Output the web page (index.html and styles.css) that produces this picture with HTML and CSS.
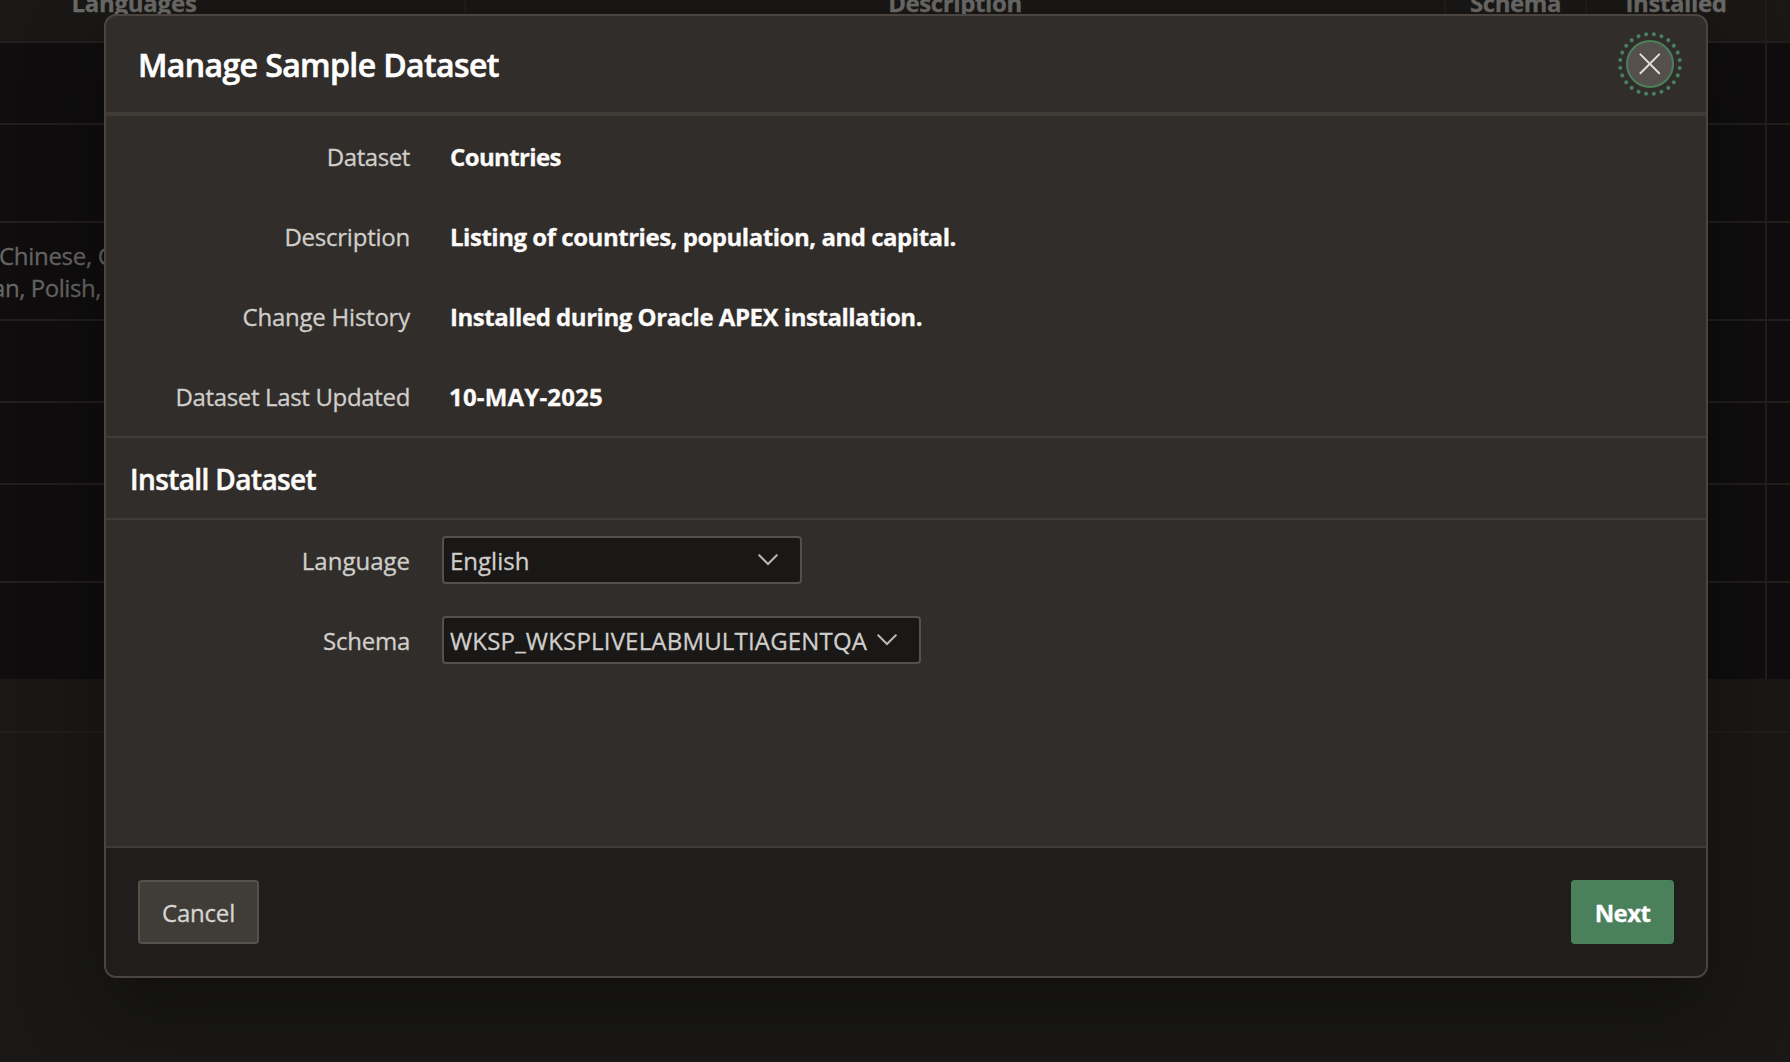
FILE: index.html
```html
<!DOCTYPE html>
<html lang="en">
<head>
<meta charset="utf-8">
<title>Manage Sample Dataset</title>
<link rel="stylesheet" href="styles.css">
</head>
<body>
<main class="page">
  <div class="report">
    <div class="row row-head"><div class="cell head-languages">Languages</div><div class="cell">Description</div><div class="cell">Schema</div><div class="cell head-installed">Installed</div><div class="cell"></div></div>
    <div class="row row-short"><div class="cell"></div><div class="cell"></div><div class="cell"></div><div class="cell"></div><div class="cell"></div></div>
    <div class="row"><div class="cell"></div><div class="cell"></div><div class="cell"></div><div class="cell"></div><div class="cell"></div></div>
    <div class="row"><div class="cell languages"><span>Chinese, C</span><span class="second">an, Polish,</span></div><div class="cell"></div><div class="cell"></div><div class="cell"></div><div class="cell"></div></div>
    <div class="row row-short"><div class="cell"></div><div class="cell"></div><div class="cell"></div><div class="cell"></div><div class="cell"></div></div>
    <div class="row row-short"><div class="cell"></div><div class="cell"></div><div class="cell"></div><div class="cell"></div><div class="cell"></div></div>
    <div class="row"><div class="cell"></div><div class="cell"></div><div class="cell"></div><div class="cell"></div><div class="cell"></div></div>
    <div class="row row-last"><div class="cell"></div><div class="cell"></div><div class="cell"></div><div class="cell"></div><div class="cell"></div></div>
  </div>
  <div class="report-foot"></div>
</main>

<section class="dialog" role="dialog" aria-labelledby="dialog-title">
  <header class="dialog-head">
    <h1 class="dialog-title" id="dialog-title">Manage Sample Dataset</h1>
    <button class="close" aria-label="Close">
      <svg class="close-icon" viewBox="0 0 64 64">
        <circle class="focus-dots" cx="32" cy="32" r="30" pathLength="240" transform="rotate(7.5 32 32)"/>
        <circle class="close-disc" cx="32" cy="32" r="23"/>
        <path class="close-cross" d="M22.4 22.4 L41.2 41.2 M41.2 22.4 L22.4 41.2"/>
      </svg>
    </button>
  </header>
  <div class="dialog-body">
    <div class="field"><div class="label tightest">Dataset</div><div class="value countries">Countries</div></div>
    <div class="field"><div class="label tight">Description</div><div class="value">Listing of countries, population, and capital.</div></div>
    <div class="field"><div class="label tight">Change History</div><div class="value">Installed during Oracle APEX installation.</div></div>
    <div class="field"><div class="label tighter">Dataset Last Updated</div><div class="value date">10-MAY-2025</div></div>
    <h2 class="region-title"><span>Install Dataset</span></h2>
    <div class="field"><div class="label">Language</div>
      <div class="select select-language"><span class="select-text">English</span><svg class="chevron" viewBox="0 0 20 12"><path d="M1.2 1.2 L10 10 L18.8 1.2"/></svg></div></div>
    <div class="field"><div class="label tight">Schema</div>
      <div class="select select-schema"><span class="select-text schema">WKSP_WKSPLIVELABMULTIAGENTQA</span><svg class="chevron" viewBox="0 0 20 12"><path d="M1.2 1.2 L10 10 L18.8 1.2"/></svg></div></div>
  </div>
  <footer class="dialog-foot">
    <button class="button cancel">Cancel</button>
    <button class="button next">Next</button>
  </footer>
</section>
</body>
</html>
```
FILE: styles.css
```css
* { box-sizing: border-box; }

body {
  margin: 0;
  width: 1790px;
  height: 1062px;
  overflow: hidden;
  position: relative;
  background: #191816;
  color: #d0cecb;
  font: 24px/32px "Open Sans", "Noto Sans", sans-serif;
  -webkit-text-stroke: 0.3px currentColor;
}

/* Report behind the dialog */
.page { height: 1062px; overflow: hidden; }
.report { width: 1986px; margin-left: -196px; background: #0f0d0e; }
.row {
  display: grid;
  grid-template-columns: 662px 980px 141px 180px 23px;
  height: 98px;
  border-bottom: 2px solid #211e1e;
}
.row-short { height: 82px; }
.row-last { height: 96px; border-bottom: 0; }
.cell { border-right: 2px solid #201d1d; }
.cell:last-child { border-right: 0; }
.row-head {
  height: 43px;
  background: #191816;
  color: #6b6a68;
  font-weight: 700;
  text-align: center;
  letter-spacing: -0.4px;
  line-height: 5px;
}
.row-head .cell { white-space: nowrap; }
.head-languages { letter-spacing: -0.24px; }
.languages {
  display: flex;
  flex-direction: column;
  padding: 17px 0 0 195px;
  color: #666563;
  white-space: nowrap;
  letter-spacing: -0.3px;
}
.languages .second { margin-left: -7px; letter-spacing: -0.45px; }
.report-foot { height: 54px; border-bottom: 2px solid #201e1c; }

/* Modal dialog */
.dialog {
  position: absolute;
  left: 104px;
  top: 14px;
  width: 1604px;
  height: 964px;
  display: flex;
  flex-direction: column;
  overflow: hidden;
  border: 2px solid #4a4541;
  border-radius: 12px;
  background: #312d2a;
  box-shadow: 0 32px 80px rgba(0, 0, 0, 0.35);
}
.dialog-head {
  height: 100px;
  display: flex;
  align-items: center;
  justify-content: space-between;
  padding: 0 24px 0 32px;
  border-bottom: 4px solid #3f3b37;
}
.dialog-title {
  margin: 0;
  padding-top: 1px;
  color: #fff;
  font-size: 32px;
  line-height: 40px;
  font-weight: 600;
  letter-spacing: -0.61px;
  -webkit-text-stroke-width: 0.6px;
}
.close { width: 64px; height: 64px; padding: 0; border: 0; background: none; }
.close-icon { display: block; width: 64px; height: 64px; fill: none; }
.focus-dots { stroke: #4b805c; stroke-width: 4; stroke-linecap: round; stroke-dasharray: 0.01 9.99; }
.close-disc { fill: #55504b; stroke: #4b805c; stroke-width: 2; }
.close-cross { stroke: #e0dedc; stroke-width: 2; stroke-linecap: round; }

.dialog-body { flex: 1; }
.field {
  height: 80px;
  display: grid;
  grid-template-columns: 304px 1fr;
  column-gap: 32px;
  align-items: center;
}
.label { padding-top: 1px; text-align: right; }
.tight { letter-spacing: -0.23px; }
.tighter { letter-spacing: -0.34px; }
.tightest { letter-spacing: -0.42px; }
.value { padding: 1px 0 0 8px; color: #fcfbfa; font-weight: 700; letter-spacing: -0.47px; }
.countries { letter-spacing: -0.62px; }
.date { padding-left: 7px; letter-spacing: 0.18px; }
.region-title {
  height: 84px;
  margin: 0;
  display: flex;
  align-items: center;
  padding: 1px 0 0 24px;
  border-top: 2px solid #3f3b37;
  border-bottom: 2px solid #3f3b37;
  color: #fcfbfa;
  font-size: 28px;
  font-weight: 600;
  letter-spacing: -0.6px;
  -webkit-text-stroke-width: 0.5px;
}
.select {
  height: 48px;
  display: flex;
  align-items: center;
  justify-content: space-between;
  padding: 0 22px 0 6px;
  border: 2px solid #55504b;
  border-radius: 4px;
  background: #191816;
}
.select-language { width: 360px; }
.select-schema { width: 479px; }
.select-text { padding-top: 1px; }
.schema { letter-spacing: 0.18px; }
.chevron { width: 20px; height: 12px; fill: none; stroke: #b9b7b4; stroke-width: 2; stroke-linecap: round; }

.dialog-foot {
  height: 130px;
  display: flex;
  align-items: center;
  justify-content: space-between;
  padding: 0 32px;
  border-top: 2px solid #3f3b37;
  background: #201e1c;
}
.button {
  height: 64px;
  padding: 1px 0 0;
  border: 2px solid #55504b;
  border-radius: 4px;
  font: inherit;
}
.cancel { width: 121px; background: #403c37; color: #d8d5d2; letter-spacing: -0.2px; }
.next { width: 103px; background: #4b805c; border-color: #4b805c; color: #fff; font-weight: 700; letter-spacing: -0.6px; }
```
